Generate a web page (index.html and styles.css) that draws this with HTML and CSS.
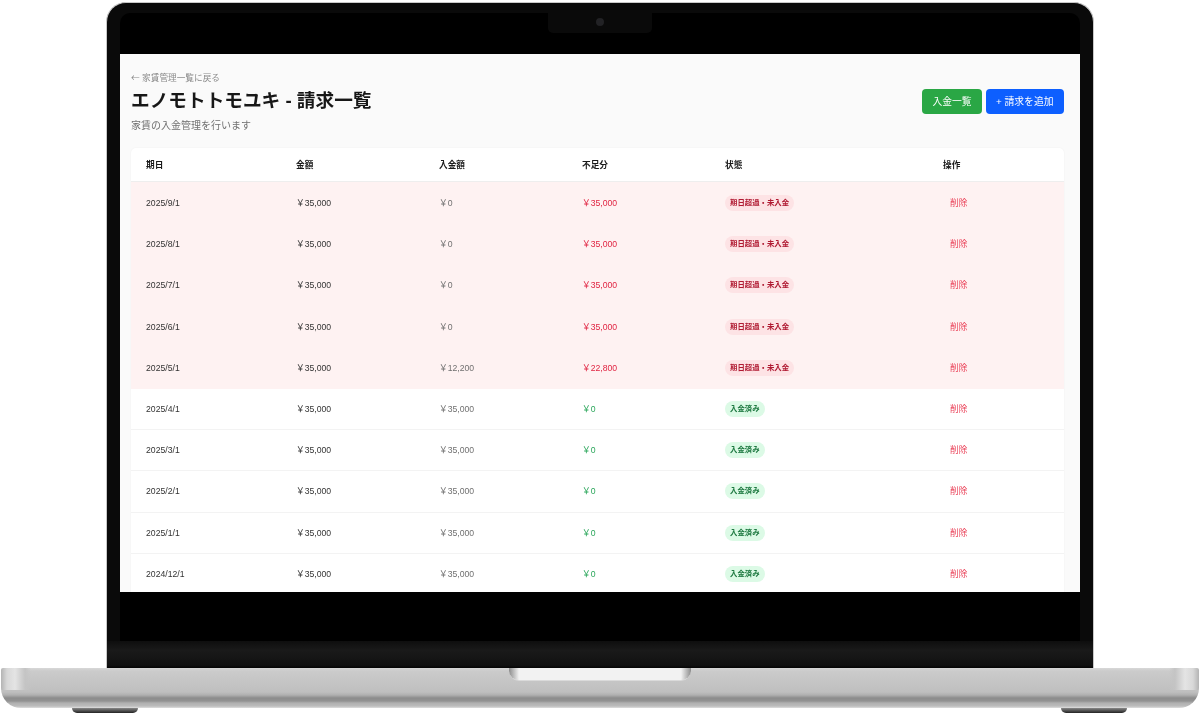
FILE: index.html
```html
<!DOCTYPE html>
<html lang="ja">
<head>
<meta charset="utf-8">
<title>請求一覧</title>
<link rel="stylesheet" href="styles.css">
</head>
<body>
<div class="laptop">
  <div class="lid">
    <div class="bezel">
      <div class="notch"><span class="camera"></span></div>
      <main class="screen">
        <header class="page-head">
          <div class="titles">
            <a class="back"><span class="arrow">←</span> 家賃管理一覧に戻る</a>
            <h1>エノモトトモユキ - 請求一覧</h1>
            <p class="sub">家賃の入金管理を行います</p>
          </div>
          <div class="actions">
            <button class="btn green">入金一覧</button>
            <button class="btn blue">+ 請求を追加</button>
          </div>
        </header>
        <section class="card">
          <div class="row head"><span>期日</span><span>金額</span><span>入金額</span><span>不足分</span><span>状態</span><span>操作</span></div>
          <div class="row late"><span>2025/9/1</span><span>￥35,000</span><span class="paid">￥0</span><span class="short">￥35,000</span><span><em class="badge bad">期日超過・未入金</em></span><span class="del">削除</span></div>
          <div class="row late"><span>2025/8/1</span><span>￥35,000</span><span class="paid">￥0</span><span class="short">￥35,000</span><span><em class="badge bad">期日超過・未入金</em></span><span class="del">削除</span></div>
          <div class="row late"><span>2025/7/1</span><span>￥35,000</span><span class="paid">￥0</span><span class="short">￥35,000</span><span><em class="badge bad">期日超過・未入金</em></span><span class="del">削除</span></div>
          <div class="row late"><span>2025/6/1</span><span>￥35,000</span><span class="paid">￥0</span><span class="short">￥35,000</span><span><em class="badge bad">期日超過・未入金</em></span><span class="del">削除</span></div>
          <div class="row late"><span>2025/5/1</span><span>￥35,000</span><span class="paid">￥12,200</span><span class="short">￥22,800</span><span><em class="badge bad">期日超過・未入金</em></span><span class="del">削除</span></div>
          <div class="row"><span>2025/4/1</span><span>￥35,000</span><span class="paid">￥35,000</span><span class="ok">￥0</span><span><em class="badge good">入金済み</em></span><span class="del">削除</span></div>
          <div class="row"><span>2025/3/1</span><span>￥35,000</span><span class="paid">￥35,000</span><span class="ok">￥0</span><span><em class="badge good">入金済み</em></span><span class="del">削除</span></div>
          <div class="row"><span>2025/2/1</span><span>￥35,000</span><span class="paid">￥35,000</span><span class="ok">￥0</span><span><em class="badge good">入金済み</em></span><span class="del">削除</span></div>
          <div class="row"><span>2025/1/1</span><span>￥35,000</span><span class="paid">￥35,000</span><span class="ok">￥0</span><span><em class="badge good">入金済み</em></span><span class="del">削除</span></div>
          <div class="row"><span>2024/12/1</span><span>￥35,000</span><span class="paid">￥35,000</span><span class="ok">￥0</span><span><em class="badge good">入金済み</em></span><span class="del">削除</span></div>
        </section>
      </main>
    </div>
    <div class="hinge"></div>
  </div>
  <div class="base">
    <div class="thumb"></div>
    <i class="foot left"></i>
    <i class="foot right"></i>
  </div>
</div>
</body>
</html>
```
FILE: styles.css
```css
* { box-sizing: border-box; }
html, body { margin: 0; height: 100%; background: #fff; overflow: hidden; }
body { font-family: "Liberation Sans", "Noto Sans CJK JP", sans-serif; }

.laptop { width: 1200px; height: 715px; display: flex; flex-direction: column; align-items: center; padding-top: 2px; }

.lid {
  width: 988px; height: 666px; flex: none;
  display: flex; flex-direction: column;
  background: #0a0a0a;
  border: 1px solid #c8c8c8; border-bottom: 0;
  border-radius: 20px 20px 0 0;
  padding: 10px 1px 0;
}
.bezel {
  position: relative; flex: 1;
  margin: 0 12px;
  background: #000;
  border-radius: 10px 10px 0 0;
  padding-top: 41px;
  min-height: 0;
}
.notch {
  position: absolute; left: 428px; top: 0; width: 104px; height: 20px;
  background: #0a0a0a; border-radius: 0 0 5px 5px;
  display: flex; justify-content: center; padding-top: 5px;
}
.camera { width: 8px; height: 8px; border-radius: 50%; background: #222225; }

.screen { width: 960px; height: 538px; overflow: hidden; background: #fafafa; padding: 17px 16px 0 11px; filter: blur(.4px); }

.page-head { display: flex; justify-content: space-between; align-items: center; height: 60px; }
.titles { display: flex; flex-direction: column; }
.back { font-size: 8.67px; line-height: 13px; color: #8a8a8a; padding-top: 1px; }
.arrow { font-family: "Noto Sans CJK JP", sans-serif; }
h1 { margin: 2px 0 0; font-size: 18.67px; line-height: 28px; font-weight: 700; color: #171717; }
.sub { margin: 4px 0 0; font-size: 10px; line-height: 14px; color: #707070; }
.actions { display: flex; gap: 4px; }
.btn { height: 25px; border: 0; border-radius: 4px; padding: 0 10px; font: inherit; font-size: 9.8px; color: #fff; }
.green { background: #2aa745; }
.blue { background: #0d5fff; padding: 0 10.5px; }

.card { margin-top: 17px; background: #fff; border-radius: 5px 5px 0 0; box-shadow: 0 0 2px rgba(0,0,0,.05); }
.row {
  display: grid; grid-template-columns: 150px 143px 143px 143px 218px 136px;
  align-items: center; height: 41.33px;
  font-size: 8.67px; line-height: 12px; color: #333;
  border-bottom: 1px solid #f3f3f3;
}
.row span { display: block; padding-left: 15px; }
.row.head { height: 34px; font-weight: 700; color: #1a1a1a; border-bottom: 1px solid #eeeeee; }
.row.late { background: #fef2f2; border-bottom: 0; }
.row .paid { color: #707070; }
.row .short { color: #e02442; }
.row .ok { color: #2aa65a; }
.row .del { padding-left: 22px; color: #ea3f56; }
.badge { display: block; width: fit-content; font-style: normal; font-weight: 700; font-size: 7.4px; line-height: 16px; padding: 0 5px; border-radius: 8px; }
.bad { background: #fde3e5; color: #b01a32; }
.good { background: #dcfae6; color: #1f7a42; }

.hinge { height: 27px; flex: none; margin: auto -1px 0; background: linear-gradient(#0e0e0e, #1a1a1a 35%, #111 90%, #050505); }

.base {
  position: relative; width: 1198px; height: 40px; flex: none;
  border-radius: 2px 2px 20px 20px;
  background:
    linear-gradient(90deg, #b4b4b4 0, #d8d8d8 6px, #e4e4e4 14px, #c4c4c4 24px, rgba(196,196,196,0) 30px, rgba(196,196,196,0) calc(100% - 30px), #c4c4c4 calc(100% - 24px), #e4e4e4 calc(100% - 14px), #d8d8d8 calc(100% - 6px), #b4b4b4 100%) 0 0 / 100% 22px no-repeat,
    linear-gradient(#d8d8d8 0, #cbcbcb 3px, #bfbfbf 24px, #b0b0b0 27px, #8c8c8c 30px, #929292 33px, #b0b0b0 35px, #bcbcbc 38px, #dedede 40px);
}
.thumb {
  position: absolute; left: 508px; top: 0; width: 182px; height: 13px;
  border-radius: 0 0 10px 10px;
  background: linear-gradient(90deg, #8c8c8c, #f2f2f2 10px, #f2f2f2 calc(100% - 10px), #8c8c8c);
  border-bottom: 1px solid #dadada;
}
.foot { position: absolute; top: 40px; width: 66px; height: 5px; background: linear-gradient(#888, #222); border-radius: 0 0 6px 6px; }
.foot.left { left: 71px; }
.foot.right { right: 72px; }
```
